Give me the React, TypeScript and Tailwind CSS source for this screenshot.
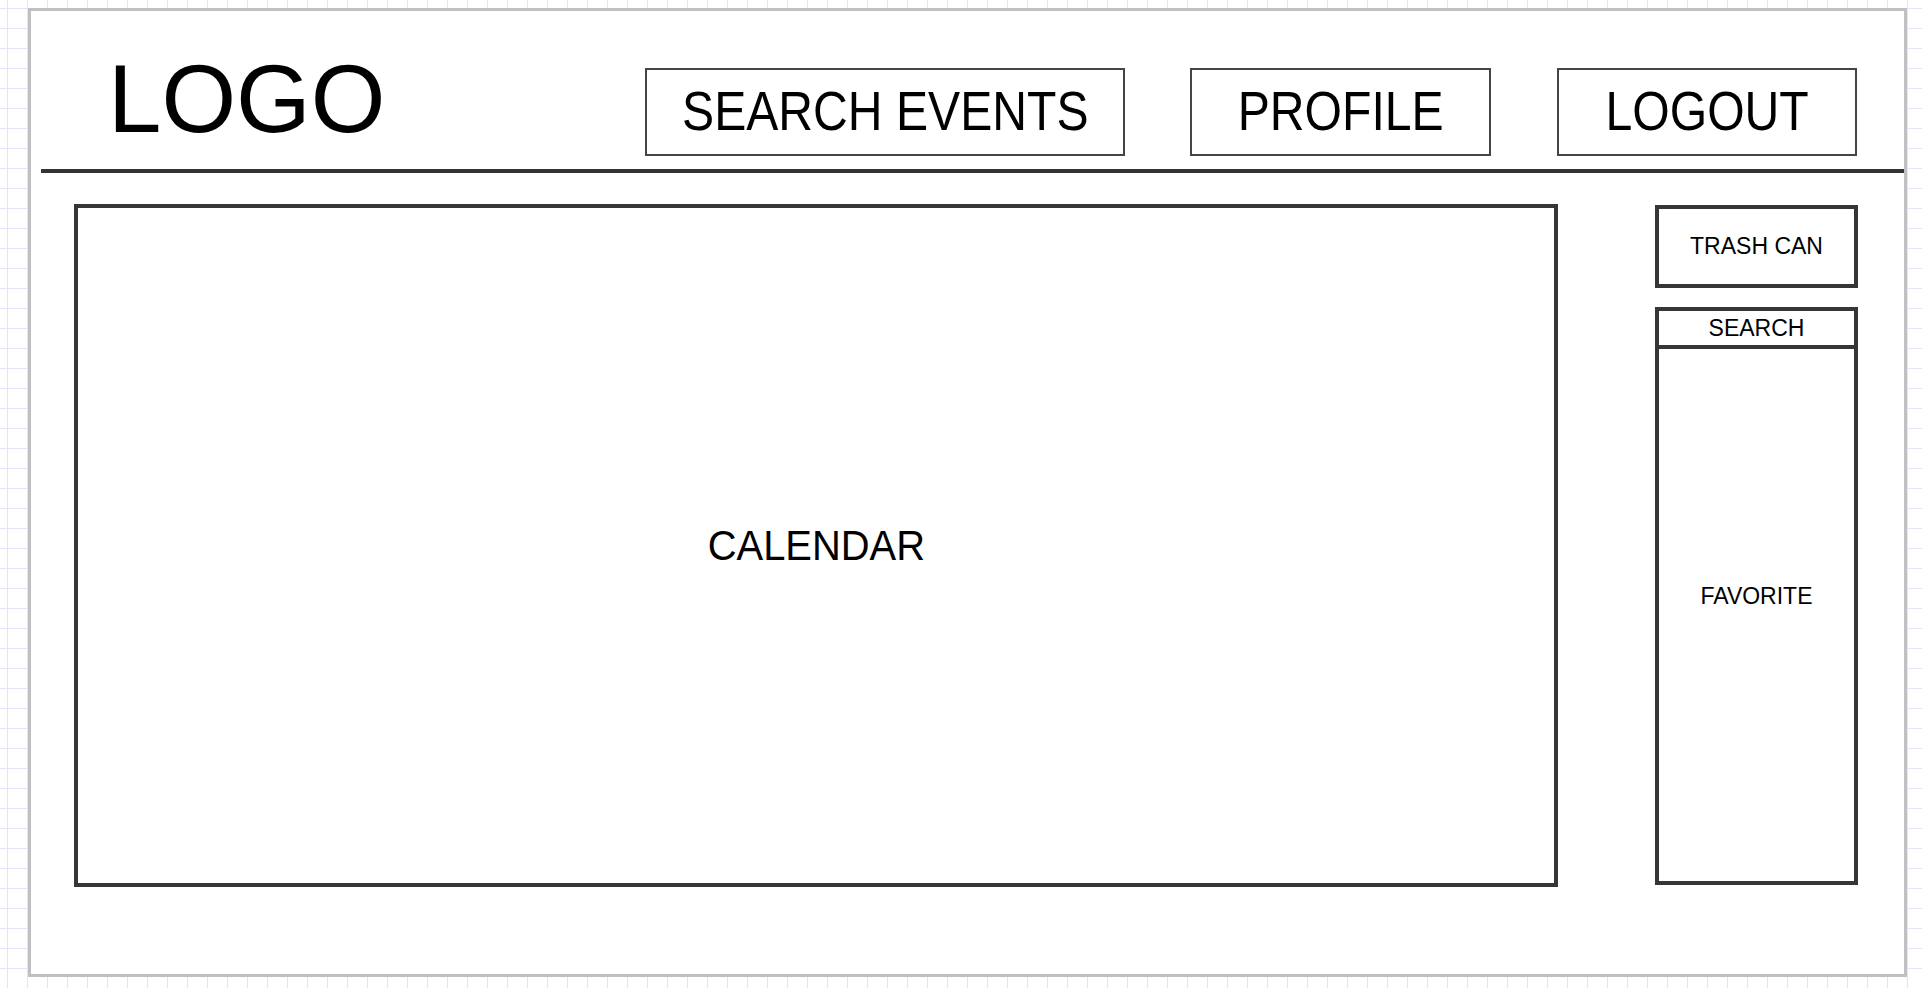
import React from "react";

const font = { fontFamily: '"Liberation Sans", Arial, sans-serif' };

type NavButtonProps = {
  label: string;
  width: string;
  className?: string;
};

function NavButton({ label, width, className = "" }: NavButtonProps) {
  return (
    <button
      className={`${width} ${className} h-[88px] border-2 border-[#454545] bg-white flex items-center justify-center pb-[2px] text-black`}
    >
      <span className="inline-block text-[55px] leading-none scale-x-[0.875] whitespace-nowrap">{label}</span>
    </button>
  );
}

export default function App() {
  return (
    <div
      className="w-[1922px] h-[988px] overflow-hidden bg-white bg-[linear-gradient(to_right,#e3e3fa_1px,transparent_1px),linear-gradient(to_bottom,#e3e3fa_1px,transparent_1px)] bg-[size:20px_20px] bg-[position:7px_8px] pt-[8px] pl-[28px]"
      style={font}
    >
      <div className="w-[1879px] h-[969px] border-[3px] border-[#c0c0c0] bg-white flex flex-col">
        {/* header */}
        <header className="h-[158px] flex items-start shrink-0">
          <div className="ml-[77px] mt-[40px] text-[96px] leading-none text-black">LOGO</div>
          <div className="flex-1" />
          <div className="flex mt-[57px] mr-[47px]">
            <NavButton label="SEARCH EVENTS" width="w-[480px]" />
            <NavButton label="PROFILE" width="w-[301px]" className="ml-[65px]" />
            <NavButton label="LOGOUT" width="w-[300px]" className="ml-[66px]" />
          </div>
        </header>
        <div className="h-[4px] ml-[10px] bg-[#333] shrink-0" />

        {/* body */}
        <main className="flex items-start mt-[31px] ml-[43px]">
          <section className="w-[1484px] h-[683px] border-[4px] border-[#363636] flex items-center justify-center">
            <span className="inline-block text-[42px] leading-none scale-x-[0.95] text-black">CALENDAR</span>
          </section>

          <aside className="ml-[97px] mt-[1px] w-[203px] flex flex-col">
            <div className="h-[83px] border-[4px] border-[#363636] flex items-center justify-center text-[23px] leading-none text-black">
              TRASH CAN
            </div>
            <div className="mt-[19px] h-[578px] border-[4px] border-[#363636] flex flex-col">
              <div className="h-[38px] border-b-[4px] border-[#363636] flex items-center justify-center text-[23px] leading-none text-black shrink-0">
                SEARCH
              </div>
              <div className="flex-1 flex items-center justify-center pb-[38px] text-[23px] leading-none text-black">
                FAVORITE
              </div>
            </div>
          </aside>
        </main>
      </div>
    </div>
  );
}
